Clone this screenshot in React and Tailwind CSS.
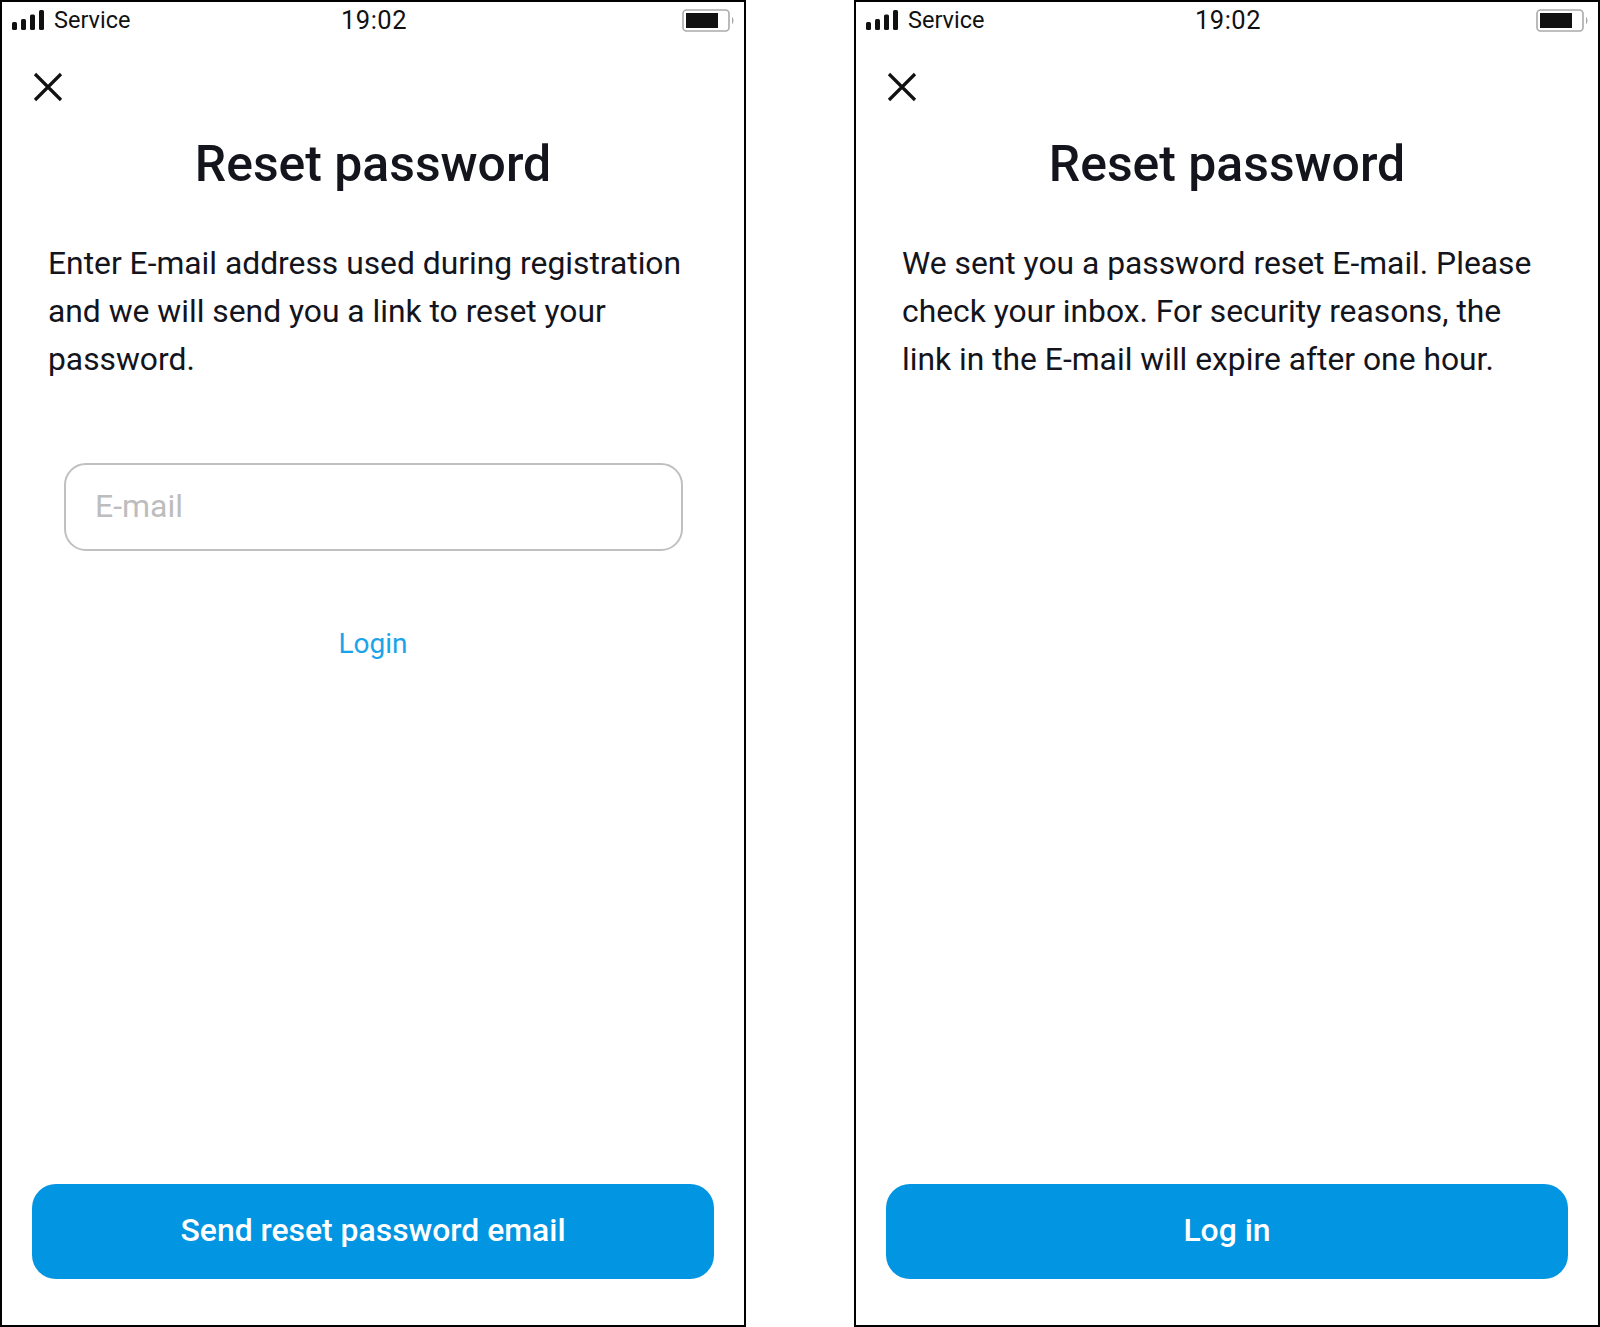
const font = { fontFamily: 'Roboto, "Liberation Sans", sans-serif' }

function StatusBar() {
  return (
    <div className="flex h-[38px] items-center justify-between pl-[10px] pr-[8px] text-[#111]">
      <div className="flex w-[200px] items-center gap-[9px]">
        <svg className="mb-[3px]" width="33" height="20" viewBox="0 0 33 20" fill="#111">
          <rect x="0" y="12" width="5" height="8" rx="1.5" />
          <rect x="9" y="9" width="5" height="11" rx="1.5" />
          <rect x="18" y="4.5" width="5" height="15.5" rx="1.5" />
          <rect x="27" y="0" width="5" height="20" rx="1.5" />
        </svg>
        <span className="text-[23.5px] leading-none">Service</span>
      </div>
      <span className="text-[25.5px] leading-none tracking-[0.5px]">19:02</span>
      <div className="flex w-[200px] items-center justify-end">
        <svg width="54" height="24" viewBox="0 0 54 24">
          <rect x="1" y="1" width="46" height="21" rx="3.5" fill="none" stroke="#aaa" strokeWidth="1.6" />
          <rect x="4" y="4" width="32" height="15" fill="#111" />
          <path d="M50 8c2 1 2 6 0 7z" fill="#aaa" />
        </svg>
      </div>
    </div>
  )
}

function Phone({ children, button }) {
  return (
    <div className="flex h-[1327px] w-[746px] flex-col border-2 border-black bg-white">
      <StatusBar />
      <div className="pl-[31px] pt-[32px]">
        <svg width="30" height="30" viewBox="0 0 30 30" fill="none" stroke="#111" strokeWidth="3.2">
          <path d="M2 2L28 28M28 2L2 28" />
        </svg>
      </div>
      <h1 className="mt-[24px] text-center text-[49.9px] font-medium leading-[76px] text-[#13141c]">Reset password</h1>
      <div className="flex-1 pt-[37px]">{children}</div>
      <div className="px-[30px] pb-[46px]">
        <button className="flex h-[95px] w-full items-center justify-center rounded-[24px] bg-[#0295e2] pb-[1px] text-[31.9px] font-medium text-white">
          {button}
        </button>
      </div>
    </div>
  )
}

export default function App() {
  return (
    <div style={font} className="flex h-[1327px] w-[1600px] justify-between overflow-hidden bg-white">
      <Phone button="Send reset password email">
        <p className="pl-[46px] pr-[45px] text-[31.8px] leading-[48px] text-[#13141c]">
          Enter E-mail address used during registration and we will send you a link to reset your password.
        </p>
        <div className="ml-[62px] mr-[61px] mt-[80px] flex h-[88px] items-center rounded-[22px] border-2 border-[#c0c0c0] pb-[3px] pl-[29px] text-[32px] text-[#bdbdbd]">
          E-mail
        </div>
        <div className="mt-[75px] text-center text-[28px] leading-[36px] text-[#1ba3ea]">Login</div>
      </Phone>
      <Phone button="Log in">
        <p className="pl-[46px] pr-[45px] text-[31.8px] leading-[48px] text-[#13141c]">
          We sent you a password reset E-mail. Please check your inbox. For security reasons, the link in the E-mail will expire after one hour.
        </p>
      </Phone>
    </div>
  )
}
